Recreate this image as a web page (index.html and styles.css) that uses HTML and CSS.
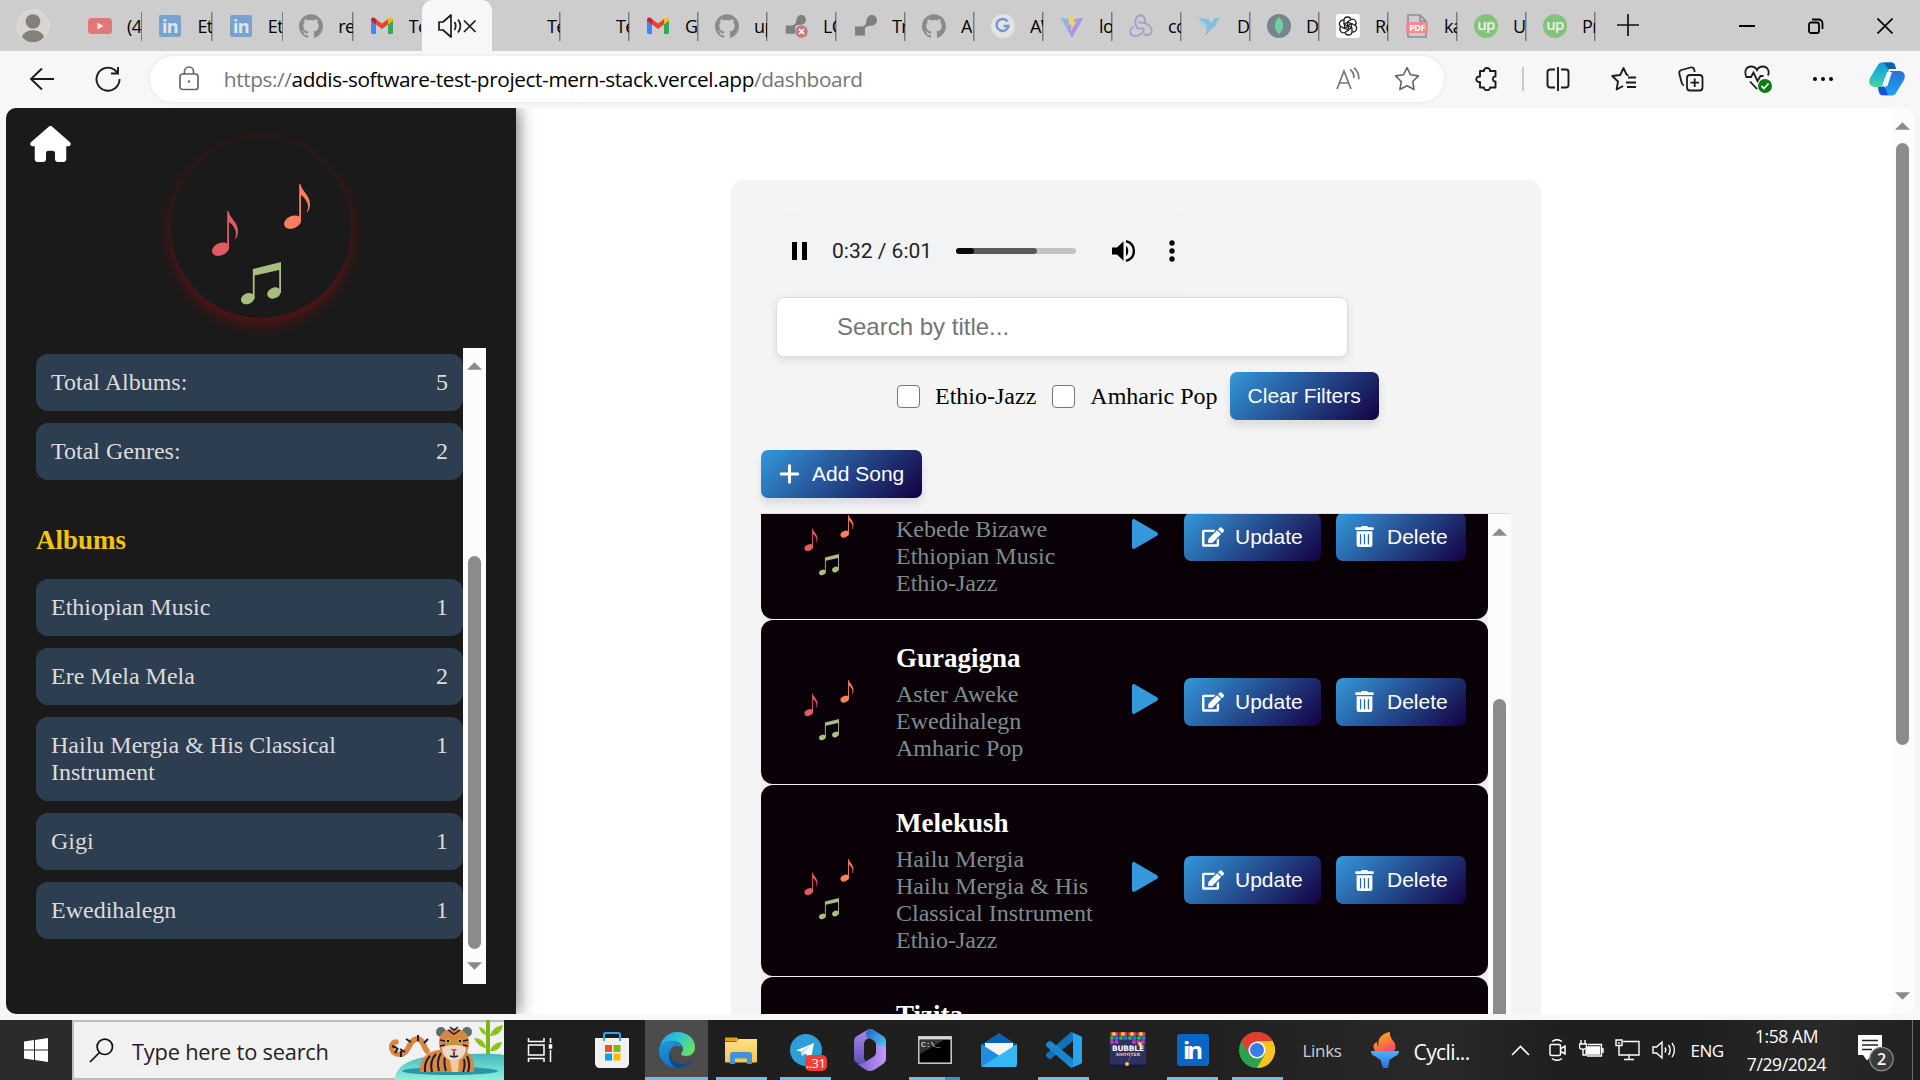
FILE: index.html
```html
<!DOCTYPE html>
<html lang="en">
<head>
<meta charset="utf-8">
<title>Dashboard</title>
<link rel="stylesheet" href="styles.css">
</head>
<body>
<svg class="defs" aria-hidden="true">
  <defs>
    <linearGradient id="gVite" x1="0" y1="0" x2="1" y2="1"><stop offset="0" stop-color="#7fc4ea"/><stop offset=".5" stop-color="#a99ae0"/><stop offset="1" stop-color="#c87fe8"/></linearGradient>
    <linearGradient id="gCopA" x1="0" y1="0" x2="0" y2="1"><stop offset="0" stop-color="#0f9bd8"/><stop offset=".5" stop-color="#1fb7d0"/><stop offset="1" stop-color="#4fd39a"/></linearGradient>
    <linearGradient id="gCopB" x1="0" y1="0" x2="0" y2="1"><stop offset="0" stop-color="#2a6fd6"/><stop offset="1" stop-color="#1aa5f5"/></linearGradient>
    <linearGradient id="gEdge" x1="0" y1="0" x2="1" y2=".5"><stop offset="0" stop-color="#1f9be0"/><stop offset=".5" stop-color="#2fc3d6"/><stop offset="1" stop-color="#62e06a"/></linearGradient>
    <linearGradient id="gEdgeB" x1="0" y1="0" x2=".6" y2="1"><stop offset="0" stop-color="#1b9de2"/><stop offset="1" stop-color="#1668c4"/></linearGradient>
    <linearGradient id="gFlame" x1="0" y1="0" x2=".6" y2="1"><stop offset="0" stop-color="#f9b233"/><stop offset=".5" stop-color="#f98a2b"/><stop offset="1" stop-color="#f0506e"/></linearGradient>
    <linearGradient id="gTorch" x1="0" y1="0" x2="0" y2="1"><stop offset="0" stop-color="#4db2f6"/><stop offset="1" stop-color="#2f6fe0"/></linearGradient>
    <linearGradient id="gFolder" x1="0" y1="0" x2="0" y2="1"><stop offset="0" stop-color="#ffe08a"/><stop offset="1" stop-color="#f8c545"/></linearGradient>
    <linearGradient id="gOff1" x1="0" y1="0" x2="0" y2="1"><stop offset="0" stop-color="#a98ae8"/><stop offset="1" stop-color="#5a4fb8"/></linearGradient>
    <linearGradient id="gOff2" x1="0" y1="0" x2="1" y2="1"><stop offset="0" stop-color="#1c63c4"/><stop offset="1" stop-color="#63d3f5"/></linearGradient>
    <linearGradient id="gOff3" x1="0" y1="0" x2="1" y2="0"><stop offset="0" stop-color="#7a5cd0"/><stop offset="1" stop-color="#c49af5"/></linearGradient>
    <linearGradient id="gPond" x1="0" y1="0" x2="0" y2="1"><stop offset="0" stop-color="#45b9bd"/><stop offset="1" stop-color="#8ff0dc"/></linearGradient>
  </defs>
  <symbol id="notes" viewBox="0 0 180 180">
    <g fill="#e05a63"><ellipse cx="49.6" cy="111.2" rx="9" ry="6.2" transform="rotate(-24 49.6 111.2)"/><path d="M56.2 73h1.2c1.5 7 9.6 11.500 9.600 20 0 3-.8 6-2.300 8h-.8c1.800-4 1.500-8-.6-11-1.500-3-3.600-5-5.300-6v26h-1.800z"/></g>
    <g fill="#f77f5f" transform="translate(72 -27)"><ellipse cx="49.6" cy="111.2" rx="9" ry="6.2" transform="rotate(-24 49.6 111.2)"/><path d="M56.2 73h1.2c1.5 7 9.6 11.500 9.600 20 0 3-.8 6-2.300 8h-.8c1.800-4 1.500-8-.6-11-1.500-3-3.600-5-5.300-6v26h-1.800z"/></g>
    <g fill="#a9bd80"><ellipse cx="76.700" cy="160.700" rx="7" ry="5.300" transform="rotate(-24 76.700 160.700)"/><ellipse cx="103" cy="155" rx="7" ry="5.300" transform="rotate(-24 103 155)"/><path d="M81.800 131 110 124v31h-1.800v-23L83.600 137.600V161h-1.800z"/></g>
  </symbol>
  <symbol id="edit" viewBox="0 0 576 512"><path d="M402.600 83.200l90.200 90.200c3.800 3.800 3.800 10 0 13.800L274.400 405.600l-92.800 10.300c-12.400 1.400-22.900-9.100-21.500-21.500l10.300-92.800L388.800 83.200c3.800-3.800 10-3.800 13.800 0zm162-22.900l-48.800-48.800c-15.200-15.200-39.900-15.200-55.200 0l-35.400 35.400c-3.800 3.800-3.800 10 0 13.800l90.200 90.200c3.800 3.800 10 3.800 13.800 0l35.400-35.400c15.200-15.300 15.200-40 0-55.200zM384 346.200V448H64V128h229.800c3.200 0 6.200-1.300 8.500-3.500l40-40c7.600-7.600 2.200-20.500-8.500-20.500H48C21.500 64 0 85.500 0 112v352c0 26.500 21.500 48 48 48h352c26.500 0 48-21.500 48-48V306.200c0-10.700-12.900-16-20.500-8.500l-40 40c-2.200 2.300-3.500 5.300-3.500 8.500z"/></symbol>
  <symbol id="trash" viewBox="0 0 448 512"><path d="M32 464a48 48 0 0 0 48 48h288a48 48 0 0 0 48-48V128H32zm272-256a16 16 0 0 1 32 0v224a16 16 0 0 1-32 0zm-96 0a16 16 0 0 1 32 0v224a16 16 0 0 1-32 0zm-96 0a16 16 0 0 1 32 0v224a16 16 0 0 1-32 0zM432 32H312l-9.400-18.700A24 24 0 0 0 281.100 0H166.800a23.720 23.720 0 0 0-21.400 13.300L136 32H16A16 16 0 0 0 0 48v32a16 16 0 0 0 16 16h416a16 16 0 0 0 16-16V48a16 16 0 0 0-16-16z"/></symbol>
  <symbol id="play" viewBox="0 0 26 30"><path d="M0 2C0 .3 1.600-.4 3 .500L25 13.200c1.300.8 1.300 2.800 0 3.600L3 29.500C1.600 30.400 0 29.700 0 28z"/></symbol>
  <symbol id="github" viewBox="0 0 24 24"><path d="M12 .297c-6.630 0-12 5.373-12 12 0 5.303 3.438 9.800 8.205 11.385.6.113.82-.258.82-.577 0-.285-.01-1.040-.015-2.040-3.338.724-4.042-1.610-4.042-1.610C4.422 18.070 3.633 17.700 3.633 17.700c-1.087-.744.084-.729.084-.729 1.205.084 1.838 1.236 1.838 1.236 1.070 1.835 2.809 1.305 3.495.998.108-.776.417-1.305.76-1.605-2.665-.3-5.466-1.332-5.466-5.930 0-1.310.465-2.380 1.235-3.220-.135-.303-.54-1.523.105-3.176 0 0 1.005-.322 3.300 1.230.96-.267 1.980-.399 3-.405 1.020.006 2.040.138 3 .405 2.280-1.552 3.285-1.230 3.285-1.230.645 1.653.24 2.873.12 3.176.765.84 1.230 1.910 1.230 3.220 0 4.610-2.805 5.625-5.475 5.920.42.36.81 1.096.81 2.220 0 1.606-.015 2.896-.015 3.286 0 .315.21.69.825.57C20.565 22.092 24 17.592 24 12.297c0-6.627-5.373-12-12-12" fill="#8b8b8b"/></symbol>
  <symbol id="gmail" viewBox="0 0 24 24"><path d="M1 6v12.500C1 19.300 1.700 20 2.500 20H6V10z" fill="#4285f4"/><path d="M23 6v12.500c0 .8-.7 1.500-1.500 1.500H18V10z" fill="#34a853"/><path d="M1 6.500V6c0-2.200 2-3 3.600-2L6 5v5.500z" fill="#c5221f"/><path d="M23 6.500V6c0-2.200-2-3-3.600-2L18 5v5.500z" fill="#fbbc04"/><path d="M6 5l6 4.500L18 5v5.500L12 15l-6-4.500z" fill="#ea4335"/></symbol>
  <symbol id="render" viewBox="0 0 24 24"><path d="M2 12.500h6c3 0 5-1.500 5.300-4.500C13.700 3 16 1 18.800 1 21.500 1 24 3.200 24 6s-2 5.500-5.500 5.700C15 12 12.500 12 12 15v6.500H2z" fill="#7f7f7f"/></symbol>
  <symbol id="arrow" viewBox="0 0 16 8"><path d="M8 0l8 8H0z" fill="#8b8b8b"/></symbol>
</svg>

<header class="tabs">
  <div class="profile"><svg width="34" height="34" viewBox="0 0 34 34"><circle cx="17" cy="17" r="16" fill="#d6d5d0" stroke="#e4e3df"/><circle cx="17" cy="12.500" r="7.300" fill="#84807c"/><path d="M6 28c2-9 20-9 22 0-5 7-17 7-22 0z" fill="#84807c"/></svg></div>
  <div class="tab wide"><svg class="fav" viewBox="0 0 24 24"><rect y="4" width="24" height="16" rx="3.500" fill="#e17777"/><path d="M9.500 8.500v7l6-3.500z" fill="#f3e4e4"/></svg><span>(4</span></div>
  <div class="tab wide"><svg class="fav" viewBox="0 0 24 24"><rect x="1" y="1" width="22" height="22" rx="2" fill="#78a3cf"/><text x="12" y="19" text-anchor="middle" font-family="Open Sans" font-weight="700" font-size="18" fill="#dde6ee">in</text></svg><span>Et</span></div>
  <div class="tab wide"><svg class="fav" viewBox="0 0 24 24"><rect x="1" y="1" width="22" height="22" rx="2" fill="#78a3cf"/><text x="12" y="19" text-anchor="middle" font-family="Open Sans" font-weight="700" font-size="18" fill="#dde6ee">in</text></svg><span>Et</span></div>
  <div class="tab wide"><svg class="fav"><use href="#github"/></svg><span>re</span></div>
  <div class="tab wide last"><svg class="fav"><use href="#gmail"/></svg><span>Te</span></div>
  <div class="tab active"><svg width="40" height="26" viewBox="0 0 40 26" fill="none" stroke="#1a1a1a" stroke-width="1.700"><path d="M2 9v8h4l8 7V2L6 9z" stroke-linejoin="round"/><path d="M17.500 9c1.500 2.500 1.500 5.500 0 8M21 6.500c3 4 3 9 0 13M27 7.500l11.500 11.500M38.500 7.500L27 19"/></svg></div>
  <div class="tab"><i class="fav"></i><span>Te</span></div>
  <div class="tab"><i class="fav"></i><span>Te</span></div>
  <div class="tab"><svg class="fav"><use href="#gmail"/></svg><span>G</span></div>
  <div class="tab"><svg class="fav"><use href="#github"/></svg><span>up</span></div>
  <div class="tab"><svg class="fav" viewBox="0 0 24 24"><use href="#render" width="22" height="22"/><circle cx="17.500" cy="17.500" r="6.300" fill="#c97a7f"/><path d="M15 15l5 5m0-5l-5 5" stroke="#fff" stroke-width="1.600"/></svg><span>LO</span></div>
  <div class="tab"><svg class="fav"><use href="#render"/></svg><span>Tr</span></div>
  <div class="tab"><svg class="fav"><use href="#github"/></svg><span>A</span></div>
  <div class="tab"><svg class="fav" viewBox="0 0 24 24"><circle cx="12" cy="12" r="12" fill="#e3e3e3"/><path d="M16.500 7.500A6 6 0 1 0 17.500 12H12.500" fill="none" stroke="#7595d0" stroke-width="2.400"/></svg><span>AW</span></div>
  <div class="tab"><svg class="fav" viewBox="0 0 24 24"><path d="M.5 3.500L12 24 23.500 3.500 12 5.500z" fill="url(#gVite)"/><path d="M15.500 1L9 2.500 8.500 11l3-.6L11 17l5.500-9.500-3 .5z" fill="#ead27c"/></svg><span>lo</span></div>
  <div class="tab"><svg class="fav" viewBox="0 0 24 24" fill="none" stroke="#a99bc9" stroke-width="1.800"><path d="M8 14C4 6 8 1 12 1.500c4 .5 5 5 3.500 7.500M9.500 8.500c9-1 14 5 13 9.500-1 3.500-5 4-8 2M15.500 15c-3 7-10 8.500-13.500 5.500C0 18 2 13.500 5 12.500M8 14.500h7"/></svg><span>co</span></div>
  <div class="tab"><svg class="fav" viewBox="0 0 24 24"><path d="M0 4l11 1.500 2.500 4L15 5.500l3-1.500 5 .5-3.500 2L17 13l-3.500 2L7 22l2-7.500z" fill="#84bedf"/><path d="M0 4l11 8-6-1z" fill="#a3d0ea"/></svg><span>D</span></div>
  <div class="tab"><svg class="fav" viewBox="0 0 24 24"><circle cx="12" cy="12" r="12" fill="#77868c"/><path d="M12 3c6 6 5 12 .5 16.500l-.5 2-.5-2C7 15 6 9 12 3z" fill="#6fd19a"/></svg><span>D</span></div>
  <div class="tab"><svg class="fav" viewBox="0 0 24 24"><rect width="24" height="24" rx="3" fill="#fff"/><g fill="none" stroke="#222" stroke-width="1.300"><path d="M12 12.500L8 10V6.500C8 2 14 2 15 5.500M12 8l4 2.300"/><path d="M12 12.500L8 10V6.500C8 2 14 2 15 5.500M12 8l4 2.300" transform="rotate(60 12 12)"/><path d="M12 12.500L8 10V6.500C8 2 14 2 15 5.500M12 8l4 2.300" transform="rotate(120 12 12)"/><path d="M12 12.500L8 10V6.500C8 2 14 2 15 5.500M12 8l4 2.300" transform="rotate(180 12 12)"/><path d="M12 12.500L8 10V6.500C8 2 14 2 15 5.500M12 8l4 2.300" transform="rotate(240 12 12)"/><path d="M12 12.500L8 10V6.500C8 2 14 2 15 5.500M12 8l4 2.300" transform="rotate(300 12 12)"/></g></svg><span>Re</span></div>
  <div class="tab"><svg class="fav" viewBox="0 0 24 24"><path d="M3 1h12l6 6v16H3zM15 1v6h6" fill="none" stroke="#8f8f8f" stroke-width="1.600"/><rect x="1" y="8" width="22" height="11" fill="#f08d8d"/><text x="12" y="17" text-anchor="middle" font-family="Open Sans" font-weight="700" font-size="9" fill="#fff">PDF</text></svg><span>ka</span></div>
  <div class="tab"><svg class="fav" viewBox="0 0 24 24"><circle cx="12" cy="12" r="12" fill="#83c37b"/><text x="12" y="16" text-anchor="middle" font-family="Open Sans" font-weight="600" font-size="15" fill="#eaf3e8">up</text></svg><span>U</span></div>
  <div class="tab"><svg class="fav" viewBox="0 0 24 24"><circle cx="12" cy="12" r="12" fill="#83c37b"/><text x="12" y="16" text-anchor="middle" font-family="Open Sans" font-weight="600" font-size="15" fill="#eaf3e8">up</text></svg><span>Pr</span></div>
  <div class="newtab"><svg width="22" height="22" viewBox="0 0 22 22"><path d="M11 0v22M0 11h22" stroke="#111" stroke-width="1.700"/></svg></div>
  <div class="winctl">
    <svg width="16" height="16" viewBox="0 0 16 16"><path d="M0 8h16" stroke="#000" stroke-width="2"/></svg>
    <svg width="16" height="16" viewBox="0 0 16 16" fill="none" stroke="#000" stroke-width="1.800"><rect x="1" y="4.500" width="10" height="10.500" rx="2"/><path d="M4 1.500h6.500a4 4 0 0 1 4 4V11"/></svg>
    <svg width="16" height="16" viewBox="0 0 16 16"><path d="M.5.5l15 15M15.500.5l-15 15" stroke="#000" stroke-width="1.700"/></svg>
  </div>
</header>

<nav class="toolbar">
  <div class="slot"><svg width="26" height="24" viewBox="0 0 26 24" fill="none" stroke="#1b1b1b" stroke-width="1.900"><path d="M25 12H2M13 1.500L2 12l11 10.500"/></svg></div>
  <div class="slot reload"><svg width="26" height="26" viewBox="0 0 26 26" fill="none" stroke="#1b1b1b" stroke-width="1.900"><path d="M24.500 13A11.500 11.500 0 1 1 19.500 3.700L23 7M23 1v6.500h-7"/></svg></div>
  <div class="address">
    <svg class="lock" width="20" height="25" viewBox="0 0 20 25" fill="none" stroke="#666" stroke-width="1.700"><rect x="1" y="8" width="18" height="15.500" rx="2.500"/><path d="M5.500 8V5.500a4.500 4.500 0 0 1 9 0V8"/><circle cx="10" cy="15.500" r="1.200" fill="#666" stroke="none"/></svg>
    <span class="url">https://<b>addis-software-test-project-mern-stack.vercel.app</b>/dashboard</span>
    <svg class="read" width="24" height="24" viewBox="0 0 24 24" fill="none" stroke="#757575" stroke-width="1.700"><path d="M1 22L8 4l7 18M3.500 16h9M14 2.500c3 2 4 5 4 8.500M18 .8c3.500 2.700 5 7 4.800 11.500"/></svg>
    <svg class="star" width="26" height="25" viewBox="0 0 26 25" fill="none" stroke="#666" stroke-width="1.600"><path d="M13 1.500l3.500 7.300 8 1.100-5.800 5.600 1.400 8L13 19.700l-7.100 3.800 1.400-8L1.500 9.900l8-1.100z" stroke-linejoin="round"/></svg>
  </div>
  <div class="slot ext"><svg width="24" height="26" viewBox="0 0 24 26" fill="none" stroke="#1b1b1b" stroke-width="1.900"><path d="M5 5h4c-.5-4 6.500-4 6 0h5.500v5.500c-3.500-.5-3.500 5.500 0 5v6H15c.5 3.500-6.500 3.500-6 0H5v-5.500c-5 .5-5-6 0-5.500z" stroke-linejoin="round"/></svg></div>
  <i class="bar"></i>
  <div class="slot"><svg width="24" height="26" viewBox="0 0 24 26" fill="none" stroke="#1b1b1b" stroke-width="1.900"><path d="M9 3.500H4A2.500 2.500 0 0 0 1.500 6v13A2.500 2.500 0 0 0 4 21.500h5M15 3.500h5A2.500 2.500 0 0 1 22.500 6v13a2.500 2.500 0 0 1-2.500 2.500h-5M12 1v24"/></svg></div>
  <div class="slot"><svg width="26" height="26" viewBox="0 0 26 26" fill="none" stroke="#1b1b1b" stroke-width="1.800"><path d="M17.500 9.500l-2-1L12.500 2l-3.300 7-8 1 5.800 5.500-1.400 8 6.500-3.500M17 11.500h8M15 16.500h10M16 21h9" stroke-linejoin="round"/></svg></div>
  <div class="slot"><svg width="26" height="26" viewBox="0 0 26 26" fill="none" stroke="#1b1b1b" stroke-width="1.800"><rect x="9" y="9" width="15.500" height="15.500" rx="3"/><path d="M16.700 12.500v8.500M12.500 16.700H21M6 19.500C4 19 4 18 3.500 16L1.300 7.500C1 5.500 1.500 4.500 3.500 4l9-2.500c2-.5 3.300.3 3.800 2.500l.5 2"/></svg></div>
  <div class="slot heart"><svg width="30" height="30" viewBox="0 0 30 30" fill="none" stroke="#1b1b1b" stroke-width="1.800"><path d="M2 12C0 6 3 2.500 7 2.500c3 0 5 1.500 6 3.500 1-2 3-3.500 6-3.500 4 0 7 4 5 9M1.500 13H7l2.500-4.500 4 8.500 3-5h3M6 17.500l7 7.500"/><circle cx="21" cy="22" r="7" fill="#0f7b10" stroke="none"/><path d="M17.500 22l2.500 2.500 4.500-5" stroke="#fff"/></svg></div>
  <div class="slot"><svg width="22" height="6" viewBox="0 0 22 6"><circle cx="3" cy="3" r="2"/><circle cx="11" cy="3" r="2"/><circle cx="19" cy="3" r="2"/></svg></div>
  <div class="slot cop"><svg width="36" height="34" viewBox="0 0 36 34"><path d="M9 3c1-2 3-2.500 5-2.500h8c3 0 4 2 5 6.500H20l-5 18H6c-5 0-7-4-5-9z" fill="url(#gCopA)"/><path d="M14 .5h8c3 0 4 2 5 6.500h-7c-2 0-2-4-6-6.500z" fill="#0b5fa8"/><path d="M27 31c-1 2-3 2.500-5 2.500h-8c-3 0-4-2-5-6.500h7l5-18h9c5 0 7 4 5 9z" fill="url(#gCopB)"/><path d="M9 25h7l3 8h-5c-3 0-4-3-5-8z" fill="#1b50d8"/><path d="M18 10h5l-4.500 14H13z" fill="#f7f7f7"/></svg></div>
</nav>

<div class="viewport">
  <aside class="sidebar">
    <svg class="home" viewBox="0 0 576 512"><path fill="#fff" d="M575.800 255.500c0 18-15 32.100-32 32.100h-32l.7 160.200c0 2.700-.2 5.400-.5 8.100V472c0 22.100-17.900 40-40 40H456c-1.100 0-2.200 0-3.300-.1c-1.400 .1-2.800 .1-4.200 .1H416 392c-22.100 0-40-17.900-40-40V448 384c0-17.700-14.300-32-32-32H256c-17.700 0-32 14.300-32 32v64 24c0 22.100-17.900 40-40 40H160 128.100c-1.500 0-3-.1-4.500-.2c-1.200 .1-2.400 .2-3.600 .2H104c-22.100 0-40-17.900-40-40V360c0-.9 0-1.900 .1-2.800V287.600H32c-18 0-32-14-32-32.100c0-9 3-17 10-24L266.400 8c7-7 15-8 22-8s15 2 21 7L564.800 231.500c8 7 12 15 11 24z"/></svg>
    <div class="logo"><svg width="180" height="180"><use href="#notes"/></svg></div>
    <div class="stats">
      <div class="statlist">
        <div class="stat"><span>Total Albums:</span><span>5</span></div>
        <div class="stat"><span>Total Genres:</span><span>2</span></div>
        <h3>Albums</h3>
        <div class="stat"><span>Ethiopian Music</span><span>1</span></div>
        <div class="stat"><span>Ere Mela Mela</span><span>2</span></div>
        <div class="stat"><span>Hailu Mergia &amp; His Classical Instrument</span><span>1</span></div>
        <div class="stat"><span>Gigi</span><span>1</span></div>
        <div class="stat"><span>Ewedihalegn</span><span>1</span></div>
      </div>
      <div class="scroll side"><svg class="tri"><use href="#arrow"/></svg><i class="thumb"></i><svg class="tri down"><use href="#arrow"/></svg></div>
    </div>
  </aside>

  <main>
    <section class="card">
      <div class="player">
        <svg width="15" height="18" viewBox="0 0 15 18"><path d="M0 0h5v18H0zM10 0h5v18h-5z"/></svg>
        <span class="time">0:32 / 6:01</span>
        <span class="track"><i class="played"></i><i class="buffered"></i></span>
        <svg class="vol" width="24" height="22" viewBox="0 0 24 22"><path d="M0 7.500v7h5l6.500 6.300V1.200L5 7.500zM14 6v10c3-1.500 3-8.500 0-10z"/><path d="M14 1.200c10.500 3 10.500 16.600 0 19.600" fill="none" stroke="#000" stroke-width="2.400"/></svg>
        <svg class="more" width="6" height="22" viewBox="0 0 6 22"><circle cx="3" cy="3" r="2.700"/><circle cx="3" cy="11" r="2.700"/><circle cx="3" cy="19" r="2.700"/></svg>
      </div>
      <div class="search">Search by title...</div>
      <div class="filters">
        <i class="check"></i><span>Ethio-Jazz</span>
        <i class="check"></i><span>Amharic Pop</span>
        <div class="btn clear">Clear Filters</div>
      </div>
      <div class="btn add"><svg width="21" height="24" viewBox="0 0 448 512"><path d="M256 80c0-17.700-14.300-32-32-32s-32 14.300-32 32V224H48c-17.700 0-32 14.300-32 32s14.300 32 32 32H192V432c0 17.700 14.300 32 32 32s32-14.300 32-32V288H400c17.700 0 32-14.300 32-32s-14.300-32-32-32H256V80z"/></svg>Add Song</div>
      <div class="list">
        <div class="songs">
          <div class="song">
            <svg class="cover"><use href="#notes"/></svg>
            <div class="info"><h4></h4><p>Kebede Bizawe</p><p>Ethiopian Music</p><p>Ethio-Jazz</p></div>
            <svg class="play"><use href="#play"/></svg>
            <div class="btn update"><svg><use href="#edit"/></svg>Update</div>
            <div class="btn delete"><svg><use href="#trash"/></svg>Delete</div>
          </div>
          <div class="song">
            <svg class="cover"><use href="#notes"/></svg>
            <div class="info"><h4>Guragigna</h4><p>Aster Aweke</p><p>Ewedihalegn</p><p>Amharic Pop</p></div>
            <svg class="play"><use href="#play"/></svg>
            <div class="btn update"><svg><use href="#edit"/></svg>Update</div>
            <div class="btn delete"><svg><use href="#trash"/></svg>Delete</div>
          </div>
          <div class="song">
            <svg class="cover"><use href="#notes"/></svg>
            <div class="info"><h4>Melekush</h4><p>Hailu Mergia</p><p>Hailu Mergia &amp; His Classical Instrument</p><p>Ethio-Jazz</p></div>
            <svg class="play"><use href="#play"/></svg>
            <div class="btn update"><svg><use href="#edit"/></svg>Update</div>
            <div class="btn delete"><svg><use href="#trash"/></svg>Delete</div>
          </div>
          <div class="song peek"><div class="info"><h4>Tizita</h4></div></div>
        </div>
        <div class="scroll songbar"><svg class="tri"><use href="#arrow"/></svg><i class="thumb"></i></div>
      </div>
    </section>
  </main>
  <div class="scroll page"><svg class="tri"><use href="#arrow"/></svg><i class="thumb"></i><svg class="tri down"><use href="#arrow"/></svg></div>
</div>

<footer class="taskbar">
  <div class="start"><svg width="24" height="24" viewBox="0 0 24 24" fill="#fff"><path d="M0 3.400l10-1.400v9.500H0zM11 1.900L24 0v11.500H11zM0 12.500h10V22L0 20.600zM11 12.500h13V24l-13-1.900z"/></svg></div>
  <div class="tsearch">
    <svg width="25" height="25" viewBox="0 0 25 25" fill="none" stroke="#111" stroke-width="1.700"><circle cx="15.800" cy="8.800" r="7.700"/><path d="M10.500 14.500L1 24"/></svg>
    <span>Type here to search</span>
    <svg class="tiger" width="116" height="60" viewBox="0 0 116 60">
      <path d="M7 60C8 44 24 36 60 35c26-1 42-2 56 0v25z" fill="url(#gPond)"/>
      <path d="M98 0h4v34h-4z" fill="#7cb518"/><path d="M102 16c2-7 7-10 13-11-1 7-6 11-13 11zM98 28c-6-1-10-5-12-10 7 0 11 4 12 10zM102 31c2-6 7-9 12-9-1 6-6 10-12 9zM98 15c-4-1-6-4-7-8 5 1 7 4 7 8z" fill="#8cc220"/>
      <ellipse cx="62" cy="51" rx="48" ry="4" fill="#2a96a3"/>
      <path d="M14 34C2 36 1 23 8 22M14 34c7-1 7-15 15-15 7 0 6 8 10 12" fill="none" stroke="#d9873f" stroke-width="5.500" stroke-linecap="round"/>
      <path d="M4 26l5 2M7 33l3-5M13 37v-6M17 32l-5-3M23 22l-5-3M30 15v6M36 23l4-4" stroke="#1d1a3a" stroke-width="2"/>
      <path d="M32 52c-1-14 8-22 22-22h20c10 2 13 12 12 22z" fill="#d9873f"/>
      <path d="M60 31h12l-2 21H64z" fill="#f3c998"/>
      <path d="M37 52c-1-8 2-13 5-16M44 52c-2-8 0-14 4-18M51 51c-2-7-1-13 2-18M58 51c-2-6-2-10-1-14M80 52c2-6 1-12-1-16M75 52c2-5 2-9 1-13" fill="none" stroke="#1d1a3a" stroke-width="2"/>
      <circle cx="53" cy="12" r="5" fill="#5d6f6b"/><circle cx="79" cy="12" r="5" fill="#5d6f6b"/>
      <path d="M51 22C51 4 81 4 81 22c0 12-7 19-15 19s-15-7-15-19z" fill="#d9873f"/>
      <path d="M54 28c3-4 21-4 24 0 0 7-6 13-12 13s-12-6-12-13z" fill="#e9d9c6"/>
      <path d="M60 10l6 4 6-4M62 7l4 3 4-3M52 20l5 1M52 26l5-1M80 20l-5 1M80 26l-5-1M66 32v4M62 36l4 1 4-1" stroke="#1d1a3a" stroke-width="1.500" fill="none"/>
      <circle cx="60" cy="21" r="2.400" fill="#a8c93a"/><circle cx="72" cy="21" r="2.400" fill="#a8c93a"/><circle cx="60" cy="21" r="1.200"/><circle cx="72" cy="21" r="1.200"/><path d="M63 29h6l-3 3.500z" fill="#c0505a"/>
    </svg>
  </div>
  <div class="apps">
    <div class="app first"><svg width="26" height="24" viewBox="0 0 26 24" fill="none" stroke="#fff" stroke-width="1.500"><path d="M1.500 0v3.500H17V0M1.500 24v-3.500H17V24M1.500 7H17v10H1.500zM23.500 0v5M23.500 12v12"/><rect x="22.500" y="7" width="2" height="3" fill="#fff"/></svg></div>
    <div class="app"><svg width="36" height="36" viewBox="0 0 36 36"><path d="M10 9V2.500C10 1.500 10.500 1 11.500 1h13c1 0 1.500.5 1.500 1.500V9" fill="none" stroke="#2aa8ea" stroke-width="2"/><path d="M1 6h34v25c0 3-2 5-5 5H6c-3 0-5-2-5-5z" fill="#f1f1f1"/><path d="M10 3v6M26 3v6" stroke="#2aa8ea" stroke-width="2"/><path d="M11 13h7v7h-7z" fill="#f25022"/><path d="M19.500 13h7v7h-7z" fill="#7fba00"/><path d="M11 21.500h7v7h-7z" fill="#00a4ef"/><path d="M19.500 21.500h7v7h-7z" fill="#ffb900"/></svg></div>
    <div class="app on current"><svg width="36" height="36" viewBox="0 0 36 36"><path d="M1 16C2 6 10 0 18 0c11 0 18 7 18 15 0 6-4 9-9 9-3 0-5-1-5-2 0-1 2-2 2-5 0-5-5-8-10-8C7 9 2 12 1 16z" fill="url(#gEdge)"/><path d="M0 19C0 12 6 9 12 9c7 0 12 3 12 8-1-2-3-3-6-3-5 0-8 4-8 9 0 6 4 11 10 13h-2C8 36 0 28 0 19z" fill="url(#gEdgeB)"/><path d="M12 20c-1 6 3 12 11 12 4 0 7-1 9-3 1 0 1 .5.500 1C29 34 24 36 19 36c-7-2-11-9-7-16z" fill="#114a8b"/></svg></div>
    <div class="app on"><svg width="34" height="32" viewBox="0 0 34 32"><path d="M1 3.500h12l3 4h-15z" fill="#e5a50a"/><path d="M1 8h11l3-3h18v22c0 1-.5 1.500-1.500 1.500h-29C1.500 28.500 1 28 1 27z" fill="url(#gFolder)"/><path d="M6 30V20.500c0-1.500 1-2.500 2.500-2.500h17c1.500 0 2.500 1 2.500 2.500V30h-5v-5.500H11V30z" fill="#3d94dc"/></svg></div>
    <div class="app on"><svg width="32" height="32" viewBox="0 0 32 32"><circle cx="16" cy="16" r="16" fill="#2d9fd8"/><path d="M6 16.500L24 9l-3 15-6-4.500-3 2.500-1-4.500z" fill="#fff"/><path d="M11 17.500L21 11l-8 8-1 3z" fill="#b5d7ec"/></svg><em>..31</em></div>
    <div class="app"><svg width="32" height="42" viewBox="0 0 32 42"><path d="M15 0L3 7C1 8 0 10 0 13v16c0 3 1 4 3 5l4 2 5-4-2-2V15c0-2 1-4 3-5l4-2z" fill="url(#gOff1)"/><path d="M15 0c2-1 3 0 4 .5L29 7c2 1.500 3 3 3 6v10l-10 1v-8c0-2-1-4-3-5l-7-3V5c0-2 1-4 3-5z" fill="url(#gOff2)"/><path d="M32 18v11c0 3-1 4.500-3 6l-9 6c-3 1.500-5 1.500-8 0l-9-6c3 .5 5 0 8-2l8-5c2-1 3-3 3-5v-7z" fill="url(#gOff3)"/></svg></div>
    <div class="app on multi"><svg width="34" height="28" viewBox="0 0 34 28"><rect x=".8" y=".8" width="32.400" height="26.400" fill="#000" stroke="#bfc5c9" stroke-width="1.600"/><path d="M1 1h32v2.500H1z" fill="#d5dadd"/><path d="M2 4h24L2 18z" fill="#555" opacity=".6"/><text x="3" y="11" font-family="Liberation Mono" font-size="8" fill="#fff">C:\_</text></svg></div>
    <div class="app"><svg width="36" height="34" viewBox="0 0 36 34"><path d="M0 12L18 0l18 12v5H0z" fill="#0a63b0"/><path d="M4 10h28v14H4z" fill="#f4f4f4"/><path d="M0 11l36 23H3c-2 0-3-1-3-3z" fill="#1e8fe0"/><path d="M36 11L0 34h33c2 0 3-1 3-3z" fill="#35b8f1"/></svg></div>
    <div class="app on"><svg width="36" height="36" viewBox="0 0 36 36"><path d="M27 9L4 27.500 0 24.500V22L25 0l2 1z" fill="#0f72b8"/><path d="M27 27L4 8.500 0 11.500V14l25 22 2-1z" fill="#1b86cf"/><path d="M25 0l9.500 4c1 .5 1.500 1 1.500 2v24c0 1-.5 1.500-1.500 2L25 36c1.500-.5 2-1 2-3V3c0-1.500-.5-2.500-2-3z" fill="#2aa3ef"/></svg></div>
    <div class="app"><svg width="36" height="36" viewBox="0 0 36 36"><rect width="36" height="36" fill="#2e3160"/><g stroke-width="4" stroke-dasharray="0 4.500" stroke-linecap="round"><path d="M2 2h34" stroke="#e33"/><path d="M4 2h32" stroke="#fc2" stroke-dasharray="0 9"/><path d="M2 6h34" stroke="#2b4"/><path d="M6 6h30" stroke="#36e" stroke-dasharray="0 9"/><path d="M2 10h8M24 10h12" stroke="#c3c"/><path d="M30 12h2" stroke="#fc2"/></g><text x="18" y="19" text-anchor="middle" font-family="DejaVu Sans" font-weight="700" font-size="7.500" textLength="32" fill="#fff">BUBBLE</text><text x="18" y="24" text-anchor="middle" font-family="DejaVu Sans" font-weight="700" font-size="4.500" fill="#ccc">SHOOTER</text><path d="M18 29l3-5" stroke="#667"/><rect y="32.500" width="36" height="3.500" fill="#191b36"/><circle cx="17" cy="32" r="2" fill="#fc3"/></svg></div>
    <div class="app on"><svg width="32" height="32" viewBox="0 0 32 32"><rect width="32" height="32" rx="3" fill="#0a66c2"/><text x="16" y="25" text-anchor="middle" font-family="Open Sans" font-weight="700" font-size="24" textLength="20" fill="#fff">in</text></svg></div>
    <div class="app on"><svg width="36" height="36" viewBox="0 0 36 36"><circle cx="18" cy="18" r="18" fill="#2ba24c"/><path d="M18 9h15.600A18 18 0 0 1 18 36l7.800-13.500z" fill="#fcc31e"/><path d="M2.400 9a18 18 0 0 1 31.200 0H18l-7.800 13.500z" fill="#e33b2e"/><circle cx="18" cy="18" r="8.600" fill="#fff"/><circle cx="18" cy="18" r="7" fill="#3b7de8"/></svg></div>
  </div>
  <span class="links">Links</span>
  <svg class="torch" width="28" height="38" viewBox="0 0 28 38"><path d="M4 20C1 15 3 12 6 11c0 2 0 3 1.500 4C6 7 12 2 19 1c-1 7 6 9 5.500 15 0 2-.5 3-1.500 4z" fill="url(#gFlame)"/><path d="M0 20h28c0 3-2 5-4.500 5.500l-5 3.500L17 37h-5L9.500 29l-5-3.500C2 25 0 23 0 20z" fill="url(#gTorch)"/></svg>
  <span class="news">Cycli...</span>
  <svg class="chev" width="19" height="11" viewBox="0 0 19 11"><path d="M1 10l8.500-8.500L18 10" fill="none" stroke="#fff" stroke-width="1.600"/></svg>
  <svg class="t1" width="18" height="22" viewBox="0 0 18 22" fill="none" stroke="#fff" stroke-width="1.500"><rect x="1" y="5.500" width="10.500" height="11" rx="1.500"/><path d="M12 9.500l4-2.500v8l-4-2.500M3 2.500C6 .3 10 .3 13 2.500M3 19.500c3 2.200 7 2.200 10 0"/></svg>
  <svg class="t2" width="25" height="22" viewBox="0 0 25 22" fill="none" stroke="#fff" stroke-width="1.400"><path d="M2 1v4M6 1v4M.5 5h7v3c0 3-7 3-7 0zM4 10v6h4M9 5.500h13.500v11.500H8M24 9v5"/><path d="M9 8h11.500v7H7v-3z" fill="#fff"/></svg>
  <svg class="t3" width="25" height="22" viewBox="0 0 25 22" fill="none" stroke="#fff" stroke-width="1.400"><path d="M8 2.500h16v13.500H4V10M14 16v4M9 20.500h10M1 1h6v5.500H1zM4 6.500V10M4 3v2"/></svg>
  <svg class="t4" width="25" height="22" viewBox="0 0 25 22" fill="none" stroke="#fff" stroke-width="1.400"><path d="M1 8v6h3.500l5.500 5V3L4.500 8zM13 8.500c1 1.500 1 3.500 0 5M16.500 6c2 3 2 7 0 10M20 4c3.200 4 3.200 10 0 14"/></svg>
  <span class="eng">ENG</span>
  <div class="clock"><span>1:58 AM</span><span>7/29/2024</span></div>
  <svg class="note" width="38" height="40" viewBox="0 0 38 40"><path d="M1 2h24v20H15l-5 5.500-4-5.500H1z" fill="#fff"/><path d="M5 7.500h16M5 12h16M5 16.500h10" stroke="#222" stroke-width="1.400"/><circle cx="24.500" cy="26" r="11.700" fill="#3b3b3b" stroke="#8a8a8a" stroke-width="1.300"/><text x="24.500" y="32" text-anchor="middle" font-family="Open Sans" font-weight="600" font-size="16" fill="#fff">2</text></svg>
  <i class="peekline"></i>
</footer>
</body>
</html>
```
FILE: styles.css
```css
* { box-sizing: border-box; }
body { margin: 0; width: 1920px; height: 1080px; overflow: hidden; display: flex; flex-direction: column; background: #f7f7f7; font-family: "Open Sans", "Noto Sans", sans-serif; color: #000; }
svg { display: block; flex: none; }
.defs { position: absolute; width: 0; height: 0; }
h3, h4, p { margin: 0; }

/* browser tab strip */
.tabs { height: 51px; flex: none; display: flex; background: #cdcdcd; }
.profile { width: 72px; flex: none; padding: 9px 0 0 16px; }
.tab { width: 69px; flex: none; display: flex; align-items: center; padding-left: 16px; overflow: hidden; background: linear-gradient(#7c7c7c, #7c7c7c) right 12px / 1.500px 29px no-repeat; font-size: 18px; letter-spacing: -.6px; }
.tab.wide { width: 70.400px; }
.tab.last { width: 68.400px; background: none; }
.tab.active { width: 70px; padding: 0 0 0 15px; background: #f7f7f7; border-radius: 11px 11px 0 0; }
.fav { width: 24px; height: 24px; flex: none; margin-right: 15px; }
.tab span { white-space: nowrap; overflow: hidden; margin-right: 1px; }
.newtab { padding: 14px 0 0 21px; }
.winctl { display: flex; gap: 53px; padding: 18px 0 0 100px; }

/* toolbar */
.toolbar { height: 57px; flex: none; display: flex; align-items: center; padding: 0 0 2px 9px; }
.slot { width: 66.400px; height: 40px; flex: none; display: flex; align-items: center; justify-content: center; }
.slot.reload { margin-left: -1px; }
.slot.cop { width: 60px; }
.slot.ext { margin-left: 10px; }
.slot.heart { padding-left: 4px; }
.bar { width: 1.500px; height: 24px; background: #c8c8c8; margin: 0 1px 0 2px; }
.address { width: 1294px; height: 46px; margin: 0 0 0 9px; flex: none; border-radius: 23px; background: #fff; display: flex; align-items: center; padding-left: 29px; box-shadow: 0 0 4px rgba(0,0,0,.08); }
.url { margin-left: 25px; font-size: 20.800px; width: 638px; letter-spacing: -.4px; white-space: nowrap; color: #757575; }
.url b { font-weight: 400; color: #000; }
.read { margin-left: 474px; }
.star { margin-left: 34px; }

/* page viewport */
.viewport { height: 906px; flex: none; margin: 0 6px; display: flex; background: #fff; border-radius: 10px; overflow: hidden; }
.scroll { display: flex; flex-direction: column; align-items: center; width: 23px; flex: none; background: #fcfcfc; }
.tri { width: 15px; height: 8px; flex: none; }
.tri.down { transform: rotate(180deg); }
.thumb { width: 13px; flex: none; border-radius: 7px; background: #8b8b8b; }

.sidebar { width: 510px; flex: none; background: #1a1a1a; padding: 18px 30px 30px; box-shadow: 3px 0 15px rgba(0,0,0,.5); font-family: "Liberation Serif", serif; font-size: 24px; line-height: 27px; color: #dcdcdc; z-index: 1; }
.home { width: 41px; height: 36px; margin-left: -6px; }
.logo { width: 180px; height: 180px; margin: -24px 0 30px 135px; border-radius: 50%; box-shadow: 0 6px 15px rgba(255,0,0,.3); }
.stats { display: flex; height: 636px; }
.statlist { width: 427px; padding-top: 6px; }
.stat { display: flex; justify-content: space-between; padding: 15px; margin-bottom: 12px; border-radius: 12px; background: #2d3e50; }
.stat span:first-child { max-width: 320px; }
.statlist h3 { font-size: 27px; line-height: 31px; color: #f1c40f; margin: 45px 0 23px; }
.side { padding-top: 14px; }
.side .thumb { margin: 186px 0 13px; height: 393px; }
.page { padding-top: 14px; }
.page .thumb { height: 602px; margin: 13px 0 247px; }

main { width: 1375px; flex: none; padding: 72px 0 0 215px; }
.card { width: 810px; height: 900px; background: #f4f4f4; border-radius: 12px; padding: 30px; }
.player { display: flex; align-items: center; width: 450px; height: 81px; border-radius: 41px; background: #f1f3f4; padding-left: 31px; }
.time { width: 99px; margin: 0 0 0 25px; font: 21px Roboto, sans-serif; color: #222; white-space: nowrap; }
.track { display: flex; margin-left: 25px; width: 120px; height: 6px; border-radius: 3px; background: #c1c3c4; overflow: hidden; }
.played { width: 18px; background: #0a0a0a; border-radius: 0 3px 3px 0; box-shadow: 3px 0 #5a5a5a; z-index: 1; }
.buffered { width: 63px; background: #5a5a5a; border-radius: 0 3px 3px 0; }
.vol { margin-left: 36px; }
.more { margin-left: 33px; }
.search { width: 572px; height: 60px; margin: 6px 0 0 15px; padding-left: 60px; border: 1.500px solid #ddd; border-radius: 8px; background: #fff; box-shadow: 0 3px 8px rgba(0,0,0,.1); font: 24px/57px "Liberation Sans", sans-serif; color: #757575; }
.filters { display: flex; align-items: center; height: 48px; margin: 15px 0 0 136px; font: 24px "Liberation Serif", serif; white-space: nowrap; }
.check { width: 23px; height: 23px; border: 1.500px solid #767676; border-radius: 4px; background: #fff; margin-right: 15px; }
.filters span { margin-right: 16px; }
.filters span + .btn { margin-left: -4px; }
.btn { display: flex; align-items: center; height: 48px; flex: none; padding: 0 18px; border-radius: 7px; background: linear-gradient(135deg, #3498db, #140042); color: #fff; font: 21px "Liberation Sans", sans-serif; box-shadow: 0 6px 9px rgba(0,0,0,.1); white-space: nowrap; }
.btn svg { fill: #fff; }
.add { width: 161px; margin-top: 30px; }
.add svg { margin-right: 12px; }

.list { display: flex; width: 750px; height: 520px; margin-top: 15px; border-top: 1px solid #ddd; overflow: hidden; }
.songs { width: 727px; flex: none; margin-top: -59.200px; background: #eee; }
.song { display: flex; align-items: center; padding: 22.700px 22px 22.300px 23px; margin-bottom: 1px; border-radius: 12px; background: #0a0007; }
.cover { width: 90px; height: 90px; }
.info { width: 210px; margin-left: 22px; flex: none; font: 24px/27px "Liberation Serif", serif; color: #7f8c8d; }
.info h4 { font-size: 27px; line-height: 31px; height: 31px; margin-bottom: 7.200px; color: #fff; }
.song.peek { height: 140px; align-items: flex-start; }
.peek .info { margin-left: 112px; }
.play { width: 26px; height: 30px; margin: 0 26px 7px; fill: #3498db; }
.update { width: 137px; margin-bottom: 1px; }
.update svg { width: 22px; height: 20px; margin-right: 11px; }
.delete { width: 130px; margin: 0 0 1px 15px; padding-left: 19px; }
.delete svg { width: 19px; height: 21px; margin-right: 13px; }
.songbar { padding-top: 14px; }
.songbar .thumb { height: 400px; margin-top: 163px; }

/* taskbar */
.taskbar { height: 60px; flex: none; margin-top: 6px; display: flex; align-items: center; color: #fff; background: linear-gradient(90deg, #2b2b2b 0, #2b2b2b 72px, #1e1e1e 504px, #202020 1200px, #292929 1440px, #1f1f1f 1560px, #1f1f1f 1700px, #292929 1820px, #202020); }
.start { width: 72px; display: flex; justify-content: center; }
.tsearch { width: 432px; height: 60px; display: flex; align-items: center; padding-left: 15px; border: 2px solid #bdbdbd; border-right: 0; background: #f1f1f1; color: #222; font-size: 21.800px; letter-spacing: -.2px; }
.tsearch span { width: 259px; margin-left: 18px; padding-top: 3px; white-space: nowrap; }
.tiger { margin: -2px 0; }
.apps { display: flex; height: 60px; margin-left: 3.500px; }
.app { width: 64.500px; height: 60px; display: flex; align-items: center; justify-content: center; position: relative; }
.app.first { margin-right: 8px; }
.app.on { background: linear-gradient(#76b9ed, #76b9ed) center bottom / 51px 3px no-repeat; }
.app.multi { background: linear-gradient(90deg, #76b9ed 36px, #5289b8 36px) center bottom / 51px 3px no-repeat; }
.app.current { background: linear-gradient(#76b9ed, #76b9ed) center bottom / 63px 3px no-repeat, linear-gradient(#4c4c4c, #4c4c4c) center / 63px 60px no-repeat; }
.app em { position: absolute; left: 31px; top: 35px; width: 22px; height: 16px; border-radius: 5px; background: #f23c34; font: 13px/16px "Open Sans", sans-serif; letter-spacing: -.5px; text-align: center; }
.links { width: 40px; margin-left: 13px; font-size: 17px; letter-spacing: -.3px; color: #cfcfcf; }
.torch { margin: 0 0 0 28px; }
.news { width: 60px; margin-left: 15px; padding-top: 3px; font-size: 21px; letter-spacing: -.6px; white-space: nowrap; }
.chev { margin-left: 37px; }
.t1 { margin-left: 19px; }
.t2 { margin-left: 12px; }
.t3 { margin-left: 11px; }
.t4 { margin-left: 12px; }
.eng { width: 36px; margin-left: 14px; font-size: 17px; letter-spacing: -.5px; }
.clock { width: 100px; margin-left: 10px; display: flex; flex-direction: column; align-items: center; font-size: 17.500px; line-height: 28px; letter-spacing: -.4px; }
.note { margin: 6px 0 0 20px; }
.peekline { width: 1.500px; height: 60px; margin-left: 17px; background: #6b6b6b; }
```
